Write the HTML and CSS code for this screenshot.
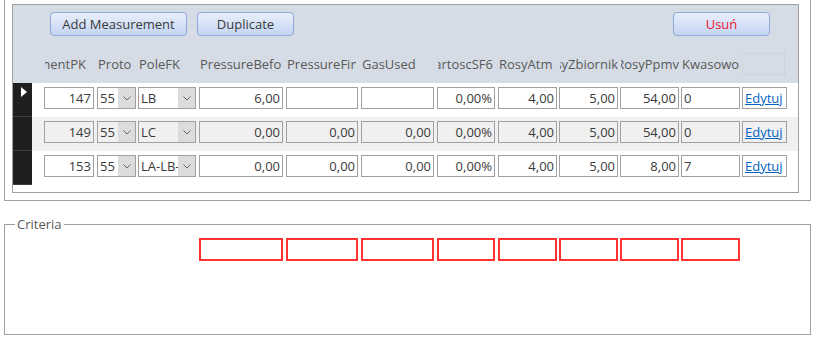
FILE: index.html
```html
<!DOCTYPE html>
<html>
<head>
	<meta charset="utf-8">
	<title>Measurements</title>
	<link rel="stylesheet" href="styles.css">
</head>
<body>
	<div class="frame">
		<div class="subform">
			<div class="header">
				<div class="buttons">
					<button class="btn btn-add">Add Measurement</button>
					<button class="btn btn-dup">Duplicate</button>
					<button class="btn btn-del">Usuń</button>
				</div>
				<div class="cols labels">
					<div class="lbl end"><span>MeasurementPK</span></div>
					<div class="lbl"><span>ProtocolFK</span></div>
					<div class="lbl"><span>PoleFK</span></div>
					<div class="lbl"><span>PressureBefore</span></div>
					<div class="lbl"><span>PressureFinal</span></div>
					<div class="lbl"><span>GasUsed</span></div>
					<div class="lbl end"><span>ZawartoscSF6</span></div>
					<div class="lbl"><span>RosyAtm</span></div>
					<div class="lbl end"><span>RosyZbiornik</span></div>
					<div class="lbl end"><span>PunktRosyPpmv</span></div>
					<div class="lbl"><span>Kwasowosc</span></div>
					<div class="lbl empty"></div>
				</div>
			</div>

			<div class="rec">
				<div class="selector"><i class="arrow"></i></div>
				<div class="cols">
					<div class="fld num">147</div>
					<div class="fld combo"><span>55</span><b class="drop"><svg width="8" height="5" viewBox="0 0 8 5"><polyline points="0.5,0.5 4,4 7.5,0.5" fill="none" stroke="#666" stroke-width="1"/></svg></b></div>
					<div class="fld combo"><span>LB</span><b class="drop"><svg width="8" height="5" viewBox="0 0 8 5"><polyline points="0.5,0.5 4,4 7.5,0.5" fill="none" stroke="#666" stroke-width="1"/></svg></b></div>
					<div class="fld num">6,00</div>
					<div class="fld num"></div>
					<div class="fld num"></div>
					<div class="fld num">0,00%</div>
					<div class="fld num">4,00</div>
					<div class="fld num">5,00</div>
					<div class="fld num">54,00</div>
					<div class="fld">0</div>
					<div class="fld link"><a href="#">Edytuj</a></div>
				</div>
			</div>

			<div class="rec alt">
				<div class="selector"></div>
				<div class="cols">
					<div class="fld num">149</div>
					<div class="fld combo"><span>55</span><b class="drop"><svg width="8" height="5" viewBox="0 0 8 5"><polyline points="0.5,0.5 4,4 7.5,0.5" fill="none" stroke="#666" stroke-width="1"/></svg></b></div>
					<div class="fld combo"><span>LC</span><b class="drop"><svg width="8" height="5" viewBox="0 0 8 5"><polyline points="0.5,0.5 4,4 7.5,0.5" fill="none" stroke="#666" stroke-width="1"/></svg></b></div>
					<div class="fld num">0,00</div>
					<div class="fld num">0,00</div>
					<div class="fld num">0,00</div>
					<div class="fld num">0,00%</div>
					<div class="fld num">4,00</div>
					<div class="fld num">5,00</div>
					<div class="fld num">54,00</div>
					<div class="fld">0</div>
					<div class="fld link"><a href="#">Edytuj</a></div>
				</div>
			</div>

			<div class="rec">
				<div class="selector"></div>
				<div class="cols">
					<div class="fld num">153</div>
					<div class="fld combo"><span>55</span><b class="drop"><svg width="8" height="5" viewBox="0 0 8 5"><polyline points="0.5,0.5 4,4 7.5,0.5" fill="none" stroke="#666" stroke-width="1"/></svg></b></div>
					<div class="fld combo"><span>LA-LB-LC</span><b class="drop"><svg width="8" height="5" viewBox="0 0 8 5"><polyline points="0.5,0.5 4,4 7.5,0.5" fill="none" stroke="#666" stroke-width="1"/></svg></b></div>
					<div class="fld num">0,00</div>
					<div class="fld num">0,00</div>
					<div class="fld num">0,00</div>
					<div class="fld num">0,00%</div>
					<div class="fld num">4,00</div>
					<div class="fld num">5,00</div>
					<div class="fld num">8,00</div>
					<div class="fld">7</div>
					<div class="fld link"><a href="#">Edytuj</a></div>
				</div>
			</div>
		</div>
	</div>

	<fieldset class="criteria">
		<legend>Criteria</legend>
		<div class="cols crit">
			<div class="skip"></div>
			<div class="skip"></div>
			<div class="skip"></div>
			<div class="box"></div>
			<div class="box"></div>
			<div class="box"></div>
			<div class="box"></div>
			<div class="box"></div>
			<div class="box"></div>
			<div class="box"></div>
			<div class="box"></div>
		</div>
	</fieldset>
</body>
</html>
```

FILE: styles.css
```css
*{
	margin: 0;
	padding: 0;
	box-sizing: border-box;
}
body{
	background: #fff;
	font-family: "Open Sans", "Noto Sans", sans-serif;
	font-size: 13px;
	color: #3a3a3a;
}
.frame{
	width: 807px;
	height: 201px;
	margin-left: 4px;
	border: 1px solid #a0a0a0;
	border-top: none;
	padding-top: 4px;
}
.subform{
	width: 787px;
	height: 189px;
	margin-left: 7px;
	border: 1px solid #a0a0a0;
}
.header{
	height: 78px;
	background: #d6dce5;
	padding: 7px 28px 0 37px;
}
.buttons{
	display: flex;
	height: 24px;
}
.btn{
	height: 24px;
	border: 1px solid #8eaadb;
	border-radius: 4px;
	background: linear-gradient(#e8effa, #c3d5f2);
	font: inherit;
	color: #3a3a3a;
}
.btn-add{
	width: 137px;
}
.btn-dup{
	width: 97px;
	margin-left: 10px;
}
.btn-del{
	width: 97px;
	margin-left: auto;
	color: #f01530;
}

/* shared column grid */
.cols{
	display: grid;
	grid-template-columns: 53px 41px 61px 87px 75px 76px 61px 61px 61px 61px 61px 45px;
}
.cols > div{
	width: calc(100% - 3px);
}
.cols > div:nth-child(2),
.cols > div:nth-child(8),
.cols > div:nth-child(9),
.cols > div:nth-child(10),
.cols > div:nth-child(11){
	width: calc(100% - 2px);
}
.cols > div:nth-child(12){
	width: 100%;
}

.labels{
	margin: 17px 0 0 -6px;
	height: 22px;
}
.cols > .lbl{
	width: calc(100% - 5px);
}
.cols > .lbl:nth-child(1){
	width: 42px;
}
.cols > .lbl:nth-child(2){
	width: 34px;
}
.lbl{
	display: flex;
	align-items: center;
	color: #595959;
	padding-left: 1px;
}
/* labels are clipped like narrow Access label controls */
.lbl span{
	display: block;
	overflow: hidden;
	white-space: nowrap;
	width: 100%;
}
.lbl.end span{
	direction: rtl;
}
.cols > .lbl.empty{
	border: 1px dotted #c6ccd5;
	width: 43px;
}

.rec{
	display: flex;
	height: 34px;
}
.rec.alt{
	background: #f0f0f0;
}
.selector{
	width: 19px;
	background: #1f1f1f;
	border-bottom: 1px solid #3c3c3c;
	position: relative;
}
.arrow{
	position: absolute;
	left: 8px;
	top: 4px;
	border-left: 6px solid #fff;
	border-top: 5px solid transparent;
	border-bottom: 5px solid transparent;
}
.rec .cols{
	margin-left: 12px;
	padding-top: 4px;
}
.fld{
	height: 22px;
	line-height: 20px;
	border: 1px solid #a0a0a0;
	background: #fff;
	padding: 0 2px;
	overflow: hidden;
	white-space: nowrap;
}
.alt .fld{
	background: #f0f0f0;
}
.fld.num{
	text-align: right;
}
.combo{
	display: flex;
	padding-right: 0;
}
.combo span{
	flex: 1;
	overflow: hidden;
}
.drop{
	width: 17px;
	background: #dcdcdc;
	display: flex;
	align-items: center;
	justify-content: center;
}
.link a{
	color: #0563c1;
}

.criteria{
	width: 807px;
	height: 120px;
	margin: 14px 0 0 4px;
	border: 1px solid #a0a0a0;
	padding: 0 0 0 39px;
}
.criteria legend{
	margin-left: -29px;
	padding: 0 2px;
	color: #595959;
	line-height: 18px;
}
.crit{
	margin-top: 5px;
}
.crit .box{
	height: 23px;
	border: 2px solid #ff3333;
}
```
